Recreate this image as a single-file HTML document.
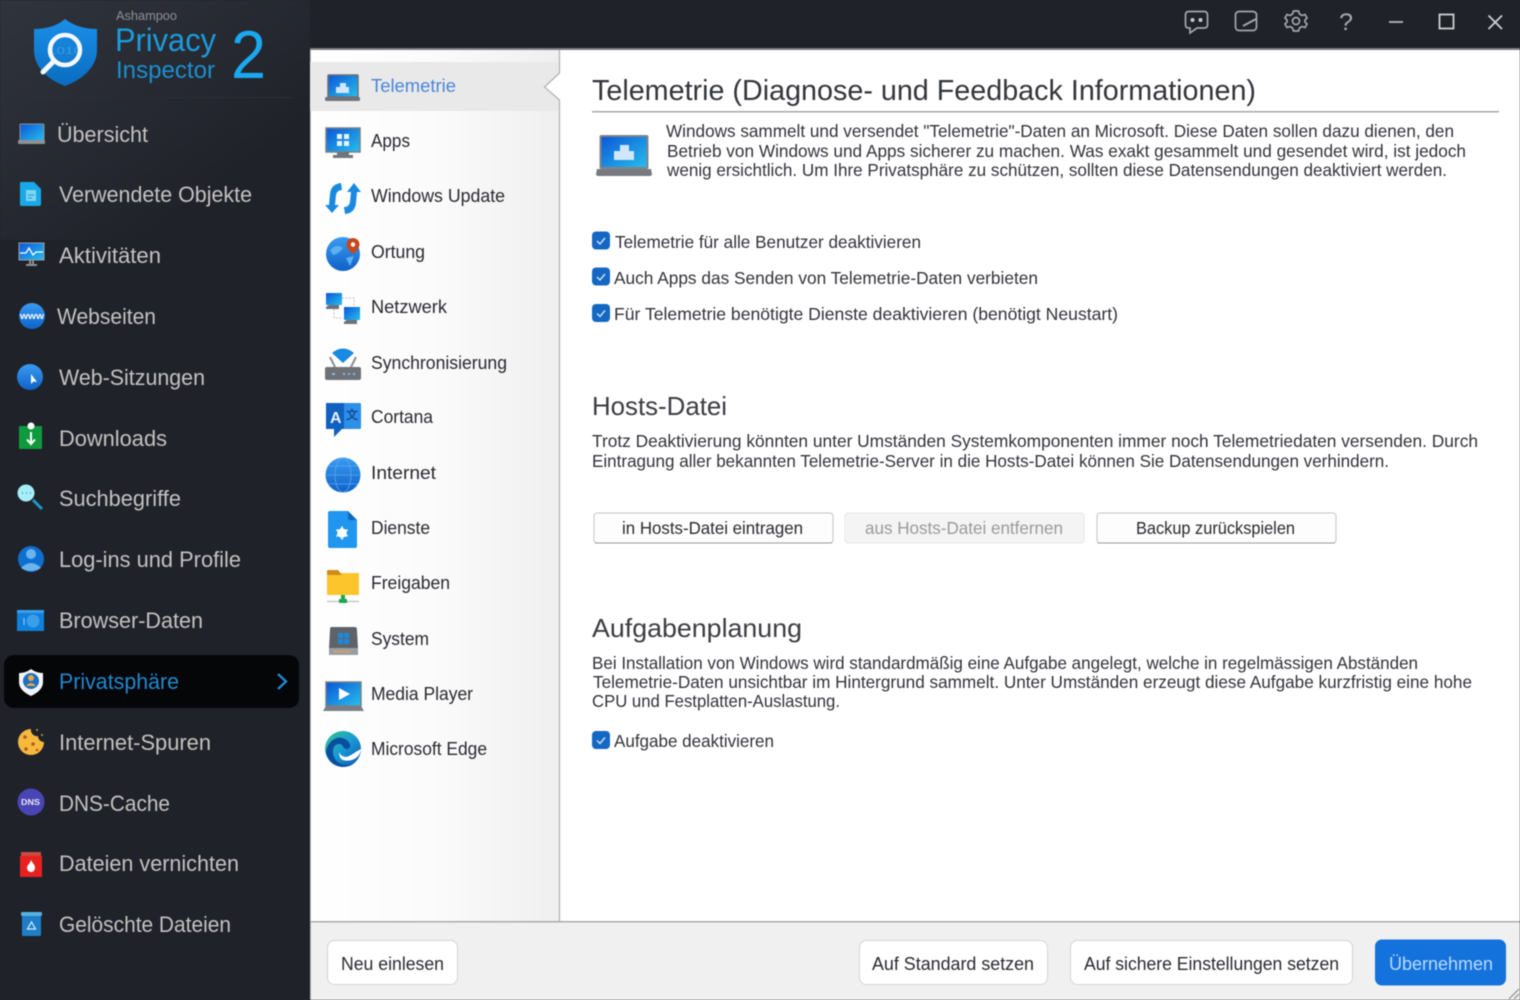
<!DOCTYPE html>
<html lang="de"><head><meta charset="utf-8"><title>Ashampoo Privacy Inspector 2</title>
<style>
html,body{margin:0;padding:0;width:1520px;height:1000px;overflow:hidden;background:#1f2229}
svg{display:block;filter:blur(.5px)}
text{font-family:"Liberation Sans",sans-serif}
.s{font-size:22px;fill:#c4c2c0}
.m{font-size:18px;fill:#2a2a30}
.b{font-size:17.5px;fill:#33343a}
.h{font-size:26px;fill:#3c3d42}
</style></head><body>
<svg width="1520" height="1000" viewBox="0 0 1520 1000" xmlns="http://www.w3.org/2000/svg">
<defs>
<linearGradient id="side" gradientUnits="userSpaceOnUse" x1="0" y1="0" x2="170" y2="230"><stop offset="0" stop-color="#30343c"/><stop offset="1" stop-color="#1f2229"/></linearGradient>
<linearGradient id="panel" x1="0" y1="0" x2="1" y2="0"><stop offset="0" stop-color="#fff"/><stop offset=".5" stop-color="#fbfbfb"/><stop offset="1" stop-color="#efefef"/></linearGradient>
<linearGradient id="scr" x1="0" y1="0" x2="1" y2="1"><stop offset="0" stop-color="#0b55d8"/><stop offset="1" stop-color="#27c0ec"/></linearGradient>
<linearGradient id="globe" x1="0" y1="0" x2="0" y2="1"><stop offset="0" stop-color="#3a9bf0"/><stop offset="1" stop-color="#0f62c8"/></linearGradient>
<linearGradient id="shield" x1="0" y1="0" x2="0" y2="1"><stop offset="0" stop-color="#1a8fe8"/><stop offset="1" stop-color="#0a6cc0"/></linearGradient>
<linearGradient id="edge" x1="0" y1="0" x2="1" y2="1"><stop offset="0" stop-color="#2fc68a"/><stop offset=".5" stop-color="#1a9ad6"/><stop offset="1" stop-color="#0b53a8"/></linearGradient>
</defs>

<!-- window chrome -->
<rect width="1520" height="1000" fill="#1f2229"/>
<rect width="310" height="1000" fill="#1f2229"/>
<rect width="310" height="240" fill="url(#side)"/>
<rect x="310" y="48" width="1210" height="2" fill="#7c7d82"/>
<rect x="310" y="50" width="1210" height="950" fill="#fff"/>

<!-- logo -->
<path d="M65 19C57 26 46 29 34 29V50C34 68 49 80 65 86C81 80 97 68 97 50V29C85 29 74 26 65 19Z" fill="url(#shield)"/>
<text x="48" y="54" font-size="10" fill="#4fb0ee" textLength="34" lengthAdjust="spacingAndGlyphs">1010</text>
<circle cx="65" cy="50" r="15" fill="#1a82d8" fill-opacity=".4" stroke="#f4f8fb" stroke-width="4.5"/>
<path d="M54 61L43 72" stroke="#f4f8fb" stroke-width="5" stroke-linecap="round"/>
<text x="116" y="20" font-size="13" fill="#8f9096" textLength="61" lengthAdjust="spacingAndGlyphs">Ashampoo</text>
<text x="115" y="51" font-size="32" fill="#1c9bdc" textLength="101" lengthAdjust="spacingAndGlyphs">Privacy</text>
<text x="116" y="78" font-size="24" fill="#1c8fd0" textLength="99" lengthAdjust="spacingAndGlyphs">Inspector</text>
<text x="231" y="78" font-size="68" fill="#1aa8f0" textLength="35" lengthAdjust="spacingAndGlyphs">2</text>
<rect x="15" y="97" width="278" height="1" fill="#2c2f36"/>

<!-- sidebar items -->
<rect x="4" y="655" width="295" height="53" rx="10" fill="#050608"/>
<text class="s" x="57" y="142" textLength="91" lengthAdjust="spacingAndGlyphs">Übersicht</text>
<text class="s" x="59" y="202" textLength="193" lengthAdjust="spacingAndGlyphs">Verwendete Objekte</text>
<text class="s" x="59" y="263" textLength="102" lengthAdjust="spacingAndGlyphs">Aktivitäten</text>
<text class="s" x="57" y="324" textLength="99" lengthAdjust="spacingAndGlyphs">Webseiten</text>
<text class="s" x="59" y="385" textLength="146" lengthAdjust="spacingAndGlyphs">Web-Sitzungen</text>
<text class="s" x="59" y="446" textLength="108" lengthAdjust="spacingAndGlyphs">Downloads</text>
<text class="s" x="59" y="506" textLength="122" lengthAdjust="spacingAndGlyphs">Suchbegriffe</text>
<text class="s" x="59" y="567" textLength="182" lengthAdjust="spacingAndGlyphs">Log-ins und Profile</text>
<text class="s" x="59" y="628" textLength="144" lengthAdjust="spacingAndGlyphs">Browser-Daten</text>
<text class="s" x="59" y="689" textLength="120" lengthAdjust="spacingAndGlyphs" style="fill:#2088d0">Privatsphäre</text>
<text class="s" x="59" y="750" textLength="152" lengthAdjust="spacingAndGlyphs">Internet-Spuren</text>
<text class="s" x="59" y="811" textLength="111" lengthAdjust="spacingAndGlyphs">DNS-Cache</text>
<text class="s" x="59" y="871" textLength="180" lengthAdjust="spacingAndGlyphs">Dateien vernichten</text>
<text class="s" x="59" y="932" textLength="172" lengthAdjust="spacingAndGlyphs">Gelöschte Dateien</text>
<path d="M278 674L286 681.500L278 689" fill="none" stroke="#2088d0" stroke-width="2.400"/>

<!-- sidebar icons -->
<rect x="20" y="124" width="24" height="17" rx="1" fill="url(#scr)" stroke="#8a8f96" stroke-width="1"/>
<rect x="18" y="140" width="27" height="4" rx="1" fill="#8d9196"/>
<path d="M21 182H34L41 189V204Q41 206 39 206H21Q20 206 20 204V184Q20 182 21 182Z" fill="#19a9e8"/>
<path d="M26 190H36V201H26Z" fill="#7fd4f2"/><path d="M28 195H34M28 198H32" stroke="#1a9ad8"/>
<rect x="19" y="243" width="25" height="17" fill="url(#scr)" stroke="#9a9ea4"/>
<path d="M20 253H26L29 248L33 255L36 252H43" fill="none" stroke="#fff" stroke-width="1.300"/>
<path d="M26 265H37M30 260V265M33 260V265" stroke="#8d9196" stroke-width="2"/>
<circle cx="32" cy="316" r="13" fill="url(#globe)"/>
<text x="20" y="319" font-size="9" font-weight="bold" fill="#fff" textLength="24" lengthAdjust="spacingAndGlyphs">www</text>
<circle cx="30" cy="377" r="13" fill="url(#globe)"/>
<path d="M31 374L31 384L33.500 381.500L37 382Z" fill="#fff"/>
<rect x="19" y="426" width="23" height="23" rx="1" fill="#109a3e"/>
<circle cx="31" cy="426" r="3.500" fill="#fff"/>
<path d="M31 432V443M27 439.500L31 444L35 439.500" fill="none" stroke="#fff" stroke-width="2"/>
<circle cx="26" cy="493" r="8.500" fill="#a6eef8"/>
<path d="M33 500L42 509" stroke="#1a9ac8" stroke-width="3"/>
<path d="M22 493H23M26 493H27M30 493H31" stroke="#3a8aa8" stroke-width="1.500"/>
<circle cx="31" cy="559" r="13" fill="#0f6fd0"/>
<circle cx="31" cy="554" r="5" fill="#6cb4ee"/>
<path d="M21 568Q31 558 41 568Q31 574 21 568Z" fill="#6cb4ee"/>
<rect x="17" y="610" width="27" height="21" fill="#0f80dc"/>
<rect x="17" y="610" width="27" height="3" fill="#3aa0ea"/>
<circle cx="33" cy="621" r="6.500" fill="#3a9eea"/>
<path d="M24 618V625" stroke="#9fd2f4"/>
<path d="M31 669C27 672 23 673 19 673V682C19 689 25 693 31 696C37 693 43 689 43 682V673C39 673 35 672 31 669Z" fill="#f2f5f8"/>
<circle cx="31" cy="681" r="8" fill="#1a6fc8"/>
<circle cx="31" cy="678" r="3" fill="#f0a63a"/>
<path d="M26 686Q31 680 36 686Z" fill="#f0a63a"/>
<path d="M31 729A13 13 0 1 0 44 742A6 6 0 0 1 38 736A6 6 0 0 1 31 729Z" fill="#f5b93e"/>
<g fill="#b85820"><circle cx="25" cy="737" r="1.800"/><circle cx="33" cy="744" r="1.800"/><circle cx="26" cy="749" r="1.800"/><circle cx="37" cy="750" r="1.300"/></g>
<g fill="#b89a60"><circle cx="37" cy="730" r="1"/><circle cx="42" cy="735" r="1"/></g>
<circle cx="31" cy="802" r="13.500" fill="#4a45b5"/>
<text x="21" y="805" font-size="8" font-weight="bold" fill="#e8e8f5" textLength="19" lengthAdjust="spacingAndGlyphs">DNS</text>
<rect x="20" y="856" width="22" height="21" fill="#e82020"/>
<rect x="21" y="852" width="20" height="4" fill="#c84a40"/>
<path d="M31 860C32 863 35 864 35 868A4 4 0 0 1 27 868C27 865 30 864 31 860Z" fill="#fff"/>
<rect x="22" y="916" width="19" height="20" rx="1" fill="#1e7fc8"/>
<rect x="21" y="912" width="21" height="4" rx="1" fill="#58b0e0"/>
<path d="M31.500 922L35.500 929H27.500Z" fill="none" stroke="#d8eefa" stroke-width="1.200"/>

<!-- middle panel -->
<rect x="310" y="50" width="250" height="871" fill="url(#panel)"/>
<rect x="310" y="50" width="1" height="871" fill="#c0c0c0"/>
<rect x="310" y="62" width="249" height="49" fill="#e9e9e9"/>
<path d="M560 73L544 87L560 100Z" fill="#fff"/>
<path d="M559.500 50V73L544.500 87L559.500 100V921" fill="none" stroke="#b0b0b0" stroke-width="1.200"/>

<text class="m" x="371" y="92" textLength="85" lengthAdjust="spacingAndGlyphs" style="fill:#4a86d8">Telemetrie</text>
<text class="m" x="371" y="147" textLength="39" lengthAdjust="spacingAndGlyphs">Apps</text>
<text class="m" x="371" y="202" textLength="134" lengthAdjust="spacingAndGlyphs">Windows Update</text>
<text class="m" x="371" y="258" textLength="54" lengthAdjust="spacingAndGlyphs">Ortung</text>
<text class="m" x="371" y="313" textLength="76" lengthAdjust="spacingAndGlyphs">Netzwerk</text>
<text class="m" x="371" y="369" textLength="136" lengthAdjust="spacingAndGlyphs">Synchronisierung</text>
<text class="m" x="371" y="423" textLength="62" lengthAdjust="spacingAndGlyphs">Cortana</text>
<text class="m" x="371" y="479" textLength="65" lengthAdjust="spacingAndGlyphs">Internet</text>
<text class="m" x="371" y="534" textLength="59" lengthAdjust="spacingAndGlyphs">Dienste</text>
<text class="m" x="371" y="589" textLength="79" lengthAdjust="spacingAndGlyphs">Freigaben</text>
<text class="m" x="371" y="645" textLength="58" lengthAdjust="spacingAndGlyphs">System</text>
<text class="m" x="371" y="700" textLength="102" lengthAdjust="spacingAndGlyphs">Media Player</text>
<text class="m" x="371" y="755" textLength="116" lengthAdjust="spacingAndGlyphs">Microsoft Edge</text>

<!-- middle icons -->
<rect x="328" y="75" width="30" height="22" rx="1" fill="url(#scr)" stroke="#6c7076" stroke-width="1.500"/>
<rect x="325" y="97" width="35" height="4" rx="1.500" fill="#6e7278"/>
<path d="M336 93V87H340V83H346V87H349V93Z" fill="#cfe6fb"/>
<rect x="326" y="128" width="34" height="24" fill="url(#scr)" stroke="#7c8086" stroke-width="1.500"/>
<path d="M337 152H349V155H353V158H333V155H337Z" fill="#70757b"/>
<g fill="#e8f3fd"><rect x="337" y="134" width="5" height="5"/><rect x="344" y="134" width="5" height="5"/><rect x="337" y="141" width="5" height="5"/><rect x="344" y="141" width="5" height="5"/></g>
<path d="M341 183Q331 184 330 194L329 205H325L332 213L339 205H335L336 195Q337 190 342 190Z" fill="#1a8ae0"/>
<path d="M345 214Q355 213 356 203L357 192H361L354 183L347 192H351L350 202Q349 207 344 207Z" fill="#1a8ae0"/>
<circle cx="343" cy="254" r="17" fill="url(#globe)"/>
<path d="M330 250Q337 243 343 248Q339 254 333 255ZM346 258L354 256L350 266Z" fill="#5ab0f0"/>
<path d="M353 238A6.500 6.500 0 0 1 359.500 244.500Q359.500 249 353 254Q346.500 249 346.500 244.500A6.500 6.500 0 0 1 353 238Z" fill="#c8481a"/>
<circle cx="353" cy="244.500" r="2.200" fill="#fff"/>
<rect x="326" y="293" width="16" height="12" fill="url(#scr)"/>
<path d="M329 305H339V309H326V307Z" fill="#6e7278"/>
<rect x="344" y="307" width="16" height="13" fill="url(#scr)"/>
<path d="M347 320H357V324H344V322Z" fill="#6e7278"/>
<path d="M342 298H354V306M334 309V318H343" fill="none" stroke="#bbb" stroke-dasharray="2 1.500"/>
<path d="M332 353Q343 344 354 353L343 363Z" fill="#1a8ae0"/>
<path d="M330 357L335 367M356 357L351 367" stroke="#8a8e94" stroke-width="2"/>
<rect x="325" y="367" width="36" height="13" rx="2" fill="#6e7278"/>
<path d="M332 374H335M343 374H345M348 374H350M353 374H355" stroke="#8fd0f0" stroke-width="1.500"/>
<rect x="343" y="403" width="18" height="26" rx="1" fill="#2d8fe8"/>
<path d="M326 403H344V429H342L334 437V429H326Z" fill="#1060c0"/>
<text x="330" y="423" font-size="16" font-weight="bold" fill="#e8f2fc">A</text>
<text x="346" y="419" font-size="12" font-weight="bold" fill="#0f4e96">文</text>
<circle cx="343" cy="475" r="17.500" fill="url(#globe)"/>
<g fill="none" stroke="#5aa8ee" stroke-width=".8"><ellipse cx="343" cy="475" rx="8" ry="17"/><path d="M326 475H360M328 466H358M328 484H358"/></g>
<path d="M330 511H348L357 520V546Q357 548 355 548H330Q328 548 328 546V513Q328 511 330 511Z" fill="#2196f0"/>
<path d="M348 511L357 520H348Z" fill="#1268c0"/>
<circle cx="342" cy="533" r="3.500" fill="none" stroke="#fff" stroke-width="2.600"/>
<path d="M342 526.500V539.500M336.500 529.800L347.500 536.200M336.500 536.200L347.500 529.800" stroke="#fff" stroke-width="1.800"/>
<rect x="327" y="573" width="32" height="22" fill="#fcc52c"/>
<path d="M327 573V571Q327 570 328 570H338L342 575H327Z" fill="#d08a1a"/>
<path d="M327 601.500H359" stroke="#c8c8c8" stroke-width="1.500"/>
<path d="M339 603V599H341V595H345V599H347V603Z" fill="#1ca84c"/>
<path d="M331 627H355Q357 627 357 630L358 649H329L330 630Q330 627 331 627Z" fill="#5e636a"/>
<rect x="329" y="648" width="29" height="7" fill="#9a9ea4"/>
<path d="M334 651.500H350" stroke="#e8a24a" stroke-width="2" stroke-dasharray="2 1"/>
<g fill="#1a8ae0"><rect x="338" y="633" width="5" height="5"/><rect x="344" y="633" width="5" height="5"/><rect x="338" y="639" width="5" height="5"/><rect x="344" y="639" width="5" height="5"/></g>
<rect x="326" y="682" width="35" height="24" fill="url(#scr)" stroke="#7c8086" stroke-width="1.500"/>
<path d="M326 706H361L364 711H323Z" fill="#7a7e84"/>
<path d="M339 688L350 694L339 700Z" fill="#fff"/>
<circle cx="343" cy="749" r="18" fill="url(#edge)"/>
<path d="M326 752C328 740 338 735 345 739C352 743 351 749 347 749C342 749 344 744 339 744C333 744 331 752 335 759C339 765 349 768 356 761C350 770 330 770 326 752Z" fill="#0b4ea0"/>
<path d="M339 752A7 7 0 0 0 349 756C352 755 355 752 361 749C360 760 348 762 343 760C340 759 339 755 339 752Z" fill="#fff"/>

<!-- main: title -->
<text x="592" y="100" font-size="28.500" fill="#34353a" textLength="664" lengthAdjust="spacingAndGlyphs">Telemetrie (Diagnose- und Feedback Informationen)</text>
<rect x="592" y="111" width="907" height="1.500" fill="#a8a8a8"/>

<rect x="600.500" y="136" width="47" height="32" rx="1" fill="url(#scr)" stroke="#808488" stroke-width="2"/>
<path d="M597 169H651L652 174Q652 176 650 176H598Q596 176 596 174Z" fill="#777b81"/>
<path d="M614 160V151H620V145H629V151H634V160Z" fill="#cfe6fb"/>

<text class="b" x="666" y="137" textLength="788" lengthAdjust="spacingAndGlyphs">Windows sammelt und versendet "Telemetrie"-Daten an Microsoft. Diese Daten sollen dazu dienen, den</text>
<text class="b" x="667" y="157" textLength="799" lengthAdjust="spacingAndGlyphs">Betrieb von Windows und Apps sicherer zu machen. Was exakt gesammelt und gesendet wird, ist jedoch</text>
<text class="b" x="667" y="176" textLength="780" lengthAdjust="spacingAndGlyphs">wenig ersichtlich. Um Ihre Privatsphäre zu schützen, sollten diese Datensendungen deaktiviert werden.</text>

<!-- checkboxes -->
<g>
<rect x="592" y="231.500" width="18" height="18" rx="4" fill="#1468c4"/><path d="M597 241L600 244L605 238" fill="none" stroke="#cfe2f6" stroke-width="1.400"/>
<rect x="592" y="267.500" width="18" height="18" rx="4" fill="#1468c4"/><path d="M597 277L600 280L605 274" fill="none" stroke="#cfe2f6" stroke-width="1.400"/>
<rect x="592" y="304" width="18" height="18" rx="4" fill="#1468c4"/><path d="M597 313.500L600 316.500L605 310.500" fill="none" stroke="#cfe2f6" stroke-width="1.400"/>
<rect x="592" y="731" width="18" height="18" rx="4" fill="#1468c4"/><path d="M597 740.500L600 743.500L605 737.500" fill="none" stroke="#cfe2f6" stroke-width="1.400"/>
</g>
<text class="b" x="615" y="248" textLength="306" lengthAdjust="spacingAndGlyphs">Telemetrie für alle Benutzer deaktivieren</text>
<text class="b" x="614" y="284" textLength="424" lengthAdjust="spacingAndGlyphs">Auch Apps das Senden von Telemetrie-Daten verbieten</text>
<text class="b" x="614" y="320" textLength="504" lengthAdjust="spacingAndGlyphs">Für Telemetrie benötigte Dienste deaktivieren (benötigt Neustart)</text>

<!-- hosts -->
<text class="h" x="592" y="415" textLength="135" lengthAdjust="spacingAndGlyphs">Hosts-Datei</text>
<text class="b" x="592" y="447" textLength="886" lengthAdjust="spacingAndGlyphs">Trotz Deaktivierung könnten unter Umständen Systemkomponenten immer noch Telemetriedaten versenden. Durch</text>
<text class="b" x="592" y="467" textLength="797" lengthAdjust="spacingAndGlyphs">Eintragung aller bekannten Telemetrie-Server in die Hosts-Datei können Sie Datensendungen verhindern.</text>

<rect x="594" y="513" width="239" height="30" rx="3" fill="#fdfdfd" stroke="#c4c4c4"/>
<path d="M595 543H832" stroke="#9a9a9a"/>
<rect x="845" y="513" width="239" height="30" rx="3" fill="#f4f4f4" stroke="#e6e6e6"/>
<rect x="1097" y="513" width="239" height="30" rx="3" fill="#fdfdfd" stroke="#c4c4c4"/>
<path d="M1098 543H1335" stroke="#9a9a9a"/>
<text class="b" x="622" y="534" textLength="181" lengthAdjust="spacingAndGlyphs" style="fill:#2b2b30">in Hosts-Datei eintragen</text>
<text class="b" x="865" y="534" textLength="198" lengthAdjust="spacingAndGlyphs" style="fill:#9a9a9e">aus Hosts-Datei entfernen</text>
<text class="b" x="1136" y="534" textLength="159" lengthAdjust="spacingAndGlyphs" style="fill:#2b2b30">Backup zurückspielen</text>

<!-- aufgabenplanung -->
<text class="h" x="592" y="637" textLength="210" lengthAdjust="spacingAndGlyphs">Aufgabenplanung</text>
<text class="b" x="592" y="669" textLength="826" lengthAdjust="spacingAndGlyphs">Bei Installation von Windows wird standardmäßig eine Aufgabe angelegt, welche in regelmässigen Abständen</text>
<text class="b" x="593" y="688" textLength="879" lengthAdjust="spacingAndGlyphs">Telemetrie-Daten unsichtbar im Hintergrund sammelt. Unter Umständen erzeugt diese Aufgabe kurzfristig eine hohe</text>
<text class="b" x="592" y="707" textLength="248" lengthAdjust="spacingAndGlyphs">CPU und Festplatten-Auslastung.</text>
<text class="b" x="614" y="747" textLength="160" lengthAdjust="spacingAndGlyphs">Aufgabe deaktivieren</text>

<!-- footer -->
<rect x="310" y="922" width="1210" height="78" fill="#f0f0f0"/>
<rect x="310" y="921" width="1210" height="1.500" fill="#ababab"/>
<rect x="310" y="921" width="1" height="79" fill="#b0b0b0"/>
<rect x="327.500" y="940.500" width="130" height="44" rx="7" fill="#fff" stroke="#d4d4d4"/>
<rect x="859.500" y="940.500" width="188" height="44" rx="7" fill="#fff" stroke="#d4d4d4"/>
<rect x="1070.500" y="940.500" width="282" height="44" rx="7" fill="#fff" stroke="#d4d4d4"/>
<rect x="1375" y="939.500" width="131" height="46" rx="7" fill="#1472dc"/>
<text class="b" x="341" y="970" textLength="103" lengthAdjust="spacingAndGlyphs" style="fill:#2b2b30;font-size:18px">Neu einlesen</text>
<text class="b" x="872" y="970" textLength="162" lengthAdjust="spacingAndGlyphs" style="fill:#2b2b30;font-size:18px">Auf Standard setzen</text>
<text class="b" x="1084" y="970" textLength="255" lengthAdjust="spacingAndGlyphs" style="fill:#2b2b30;font-size:18px">Auf sichere Einstellungen setzen</text>
<text class="b" x="1389" y="970" textLength="104" lengthAdjust="spacingAndGlyphs" style="fill:#bcdaf6;font-size:18px">Übernehmen</text>
<path d="M1509 999L1519 989M1514 999L1519 994" stroke="#9a9a9a" stroke-width="1.300"/>

<!-- title bar icons -->
<g fill="none" stroke="#a4a6aa" stroke-width="1.700">
<path d="M1189 11.500H1204Q1207.500 11.500 1207.500 15V25Q1207.500 28 1204 28H1197L1190 33V28H1189Q1185.500 28 1185.500 25V15Q1185.500 11.500 1189 11.500Z"/>
<rect x="1235.500" y="11.500" width="21" height="19" rx="3.500"/>
<path d="M1243 26L1256 19" stroke-width="2"/>
<circle cx="1296" cy="21" r="3.500"/>
<path d="M1293.500 11H1298.500L1299.500 14L1302 15.500L1305 14.500L1307 18L1305 20V22L1307 24L1305 27.500L1302 26.500L1299.500 28L1298.500 31H1293.500L1292.500 28L1290 26.500L1287 27.500L1285 24L1287 22V20L1285 18L1287 14.500L1290 15.500L1292.500 14Z"/>
</g>
<circle cx="1192.500" cy="20" r="2" fill="#c8c8c8"/><circle cx="1200.500" cy="20" r="2" fill="#c8c8c8"/>
<text x="1339" y="30" font-size="24" fill="#a8aaae" textLength="14" lengthAdjust="spacingAndGlyphs">?</text>
<path d="M1389 22H1403" stroke="#b4b6ba" stroke-width="1.800"/>
<rect x="1439.500" y="14.500" width="14" height="14" fill="none" stroke="#cfd0d2" stroke-width="1.800"/>
<path d="M1488.500 15.500L1502 29M1502 15.500L1488.500 29" stroke="#cfd0d2" stroke-width="1.800"/>
</svg>
</body></html>
